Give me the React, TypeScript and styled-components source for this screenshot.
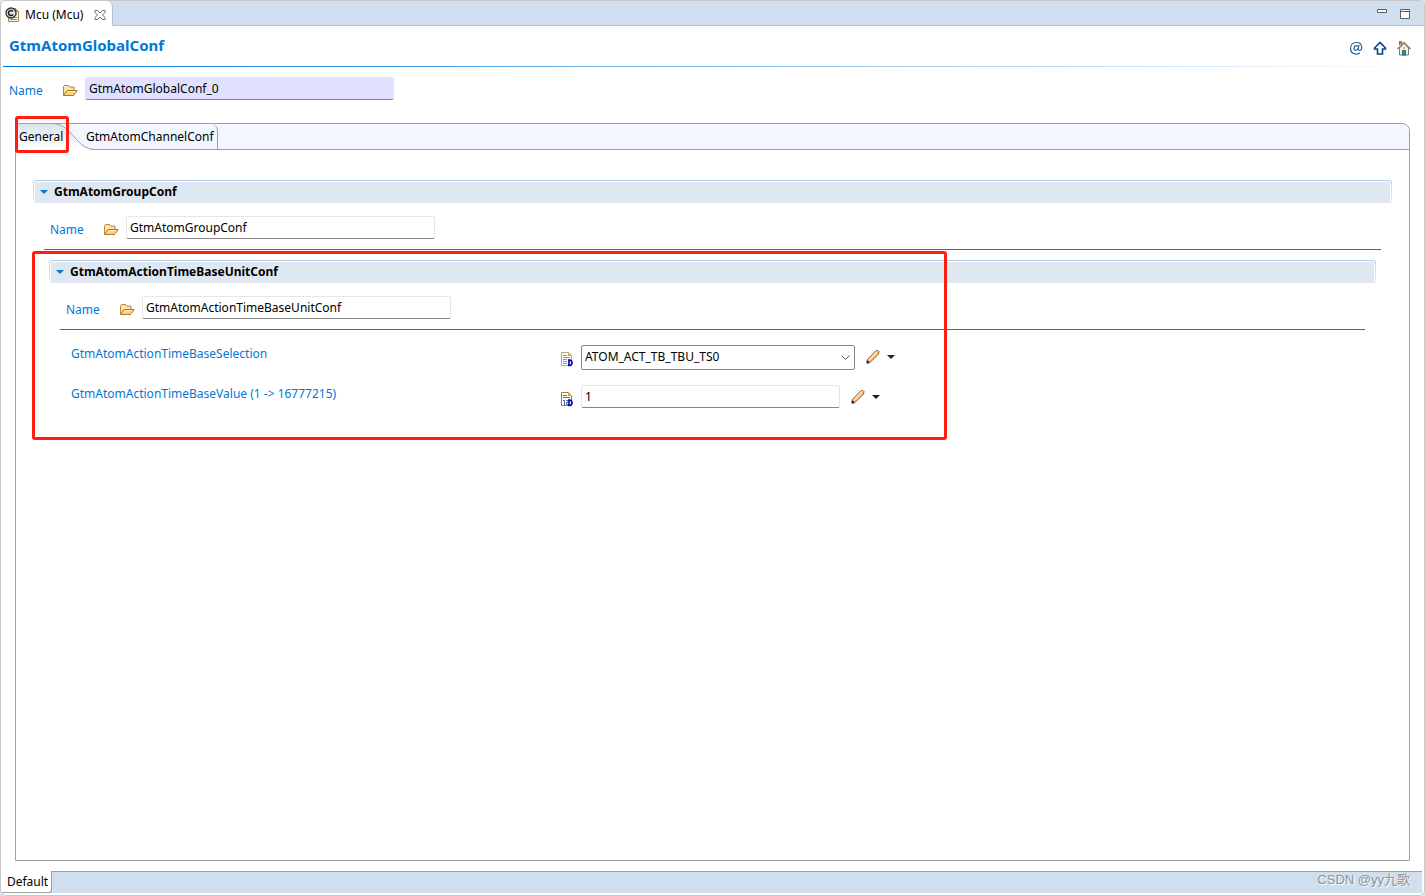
import React, { useState } from "react";
import styled, { createGlobalStyle } from "styled-components";

const GlobalStyle = createGlobalStyle`
  *, *::before, *::after { box-sizing: border-box; }
  body {
    margin: 0;
    background: #e4e4f0;
    color: #000;
    font-family: "Noto Sans", "Noto Sans CJK SC", sans-serif;
    font-size: 12px;
    line-height: 18px;
  }
  button, input, select { font: inherit; color: inherit; }
  svg { display: block; flex: none; }
`;

const Editor = styled.div`
  position: relative;
  display: flex;
  flex-direction: column;
  min-height: 100vh;
  padding-bottom: 2px;
  border: 1px solid #c8c8c8;
  border-radius: 6px;
  background: #fff;
  overflow: hidden;
`;

const TitleBar = styled.div`
  display: flex;
  justify-content: space-between;
  height: 25px;
  background: #d0dfee;
  border-bottom: 1px solid #b2bfd0;
`;

const EditorTab = styled.div`
  display: flex;
  align-items: center;
  gap: 5px;
  width: 112px;
  height: 25px;
  padding: 2px 6px 0 4px;
  background: #fff;
  border-right: 1px solid #b2bfd0;
  border-radius: 0 6px 0 0;
  white-space: nowrap;
`;

const EditorTabText = styled.span`
  flex: 1;
`;

const IconButton = styled.button`
  display: flex;
  padding: 0;
  border: 0;
  background: none;
`;

const WindowControls = styled.div`
  display: flex;
  align-items: flex-start;
  gap: 13px;
  padding: 6px 14px 0 0;
`;

const Header = styled.header`
  display: flex;
  justify-content: space-between;
  height: 41px;
  margin: 0 2px 10px;
  padding: 8px 10px 0 6px;
  background: linear-gradient(to right, #0078d7, #fff) bottom / 100% 1px no-repeat;
`;

const Title = styled.h1`
  margin: 0;
  color: #0078d7;
  font-size: 15px;
  line-height: 22px;
  font-weight: 700;
`;

const HeaderActions = styled.div`
  display: flex;
  align-items: flex-start;
  gap: 8px;
  padding-top: 6px;
`;

const NameLine = styled.div<{ $indent: number }>`
  display: flex;
  align-items: flex-end;
  height: 23px;
  padding-left: ${(p) => p.$indent}px;
`;

const NameLabel = styled.label`
  width: 53px;
  color: #0078d7;
`;

const FolderSlot = styled.span`
  width: 23px;
  padding-bottom: 3px;
`;

const TextBox = styled.input<{ $width: number; $shaded?: boolean }>`
  width: ${(p) => p.$width}px;
  height: 23px;
  padding: 0 3px 1px;
  border: 1px solid #e6e6e6;
  border-bottom-color: #868686;
  border-radius: 2px;
  background: ${(p) => (p.$shaded ? "#e0e0ff" : "#fff")};
  background-clip: padding-box;
  outline: none;
`;

const TabFolder = styled.main`
  display: flex;
  flex: 1;
  flex-direction: column;
  margin: 23px 14px 10px;
  border: 1px solid #a0a0a0;
  border-radius: 3px 8px 0 0;
`;

const TabBar = styled.div`
  position: relative;
  display: flex;
  height: 26px;
  background: #f2f6fe;
  border-bottom: 1px solid #a0a0a0;
  border-radius: 3px 8px 0 0;
`;

const FolderTab = styled.button`
  position: relative;
  height: 26px;
  width: 68px;
  padding: 0 3px;
  border: 0;
  background: none;
  text-align: left;
  white-space: nowrap;
`;

const SecondTab = styled(FolderTab)`
  height: 25px;
  width: 134px;
  padding: 0 2px;
  border-right: 1px solid #a0a0a0;
  border-radius: 0 7px 0 0;
`;

const TabShape = styled.svg`
  position: absolute;
  top: -1px;
  left: 0;
`;

const TabText = styled.span`
  position: relative;
`;

const Annotation = styled.div<{ $left: number; $top: number; $width: number; $height: number }>`
  position: absolute;
  left: ${(p) => p.$left}px;
  top: ${(p) => p.$top}px;
  width: ${(p) => p.$width}px;
  height: ${(p) => p.$height}px;
  border: 3px solid #ff1e10;
  border-radius: 3px;
  pointer-events: none;
`;

const Panel = styled.div`
  flex: 1;
  padding: 30px 17px;
`;

const Section = styled.section<{ $nested?: boolean }>`
  position: relative;
  margin: ${(p) => (p.$nested ? "10px 16px 0" : "0")};
`;

const SectionHeader = styled.h2`
  position: relative;
  height: 23px;
  margin: 0 0 13px;
  padding: 1px 2px 0;
  border-top: 1px solid #b9cae2;
  border-radius: 4px 4px 0 0;
  font-size: 12px;
  line-height: 18px;

  &::before {
    content: "";
    position: absolute;
    inset: 0 0 -5px;
    border: solid;
    border-width: 0 1px;
    border-image: linear-gradient(#b9cae2, #fff) 1;
  }
`;

const SectionToggle = styled.button`
  position: relative;
  display: flex;
  align-items: center;
  gap: 6px;
  width: 100%;
  height: 21px;
  padding: 0 0 2px 5px;
  border: 0;
  background: #dfe7f1;
  font-weight: 700;
`;

const Rule = styled.hr`
  height: 1px;
  margin: 10px 11px 0;
  border: 0;
  background: #646464;
`;

const Fields = styled.div`
  padding: 15px 0 0 22px;
`;

const FieldRow = styled.div`
  display: grid;
  grid-template-columns: 489px 21px auto auto;
  justify-content: start;
  align-items: start;
  height: 40px;
`;

const FieldLabel = styled.label`
  color: #0078d7;
`;

const TypeIcon = styled.span`
  padding-top: 6px;
`;

const SelectWrap = styled.span`
  display: flex;
  align-items: center;
  width: 274px;
`;

const Select = styled.select`
  appearance: none;
  width: 100%;
  height: 25px;
  padding: 0 20px 1px 3px;
  border: 1px solid #868686;
  border-radius: 2px;
  background: #fff;
  outline: none;
`;

const SelectArrow = styled.svg`
  margin-left: -14px;
  pointer-events: none;
`;

const EditButton = styled(IconButton)`
  align-items: center;
  gap: 6px;
  padding: 4px 0 0 10px;
`;

const Footer = styled.footer`
  display: flex;
  height: 22px;
  margin: 0 2px 0 1px;
  background: #d0dfee;
  border-top: 1px solid #a0a0a0;
`;

const PageTab = styled.button`
  width: 50px;
  height: 22px;
  margin-top: -1px;
  padding: 0 0 0 2px;
  border: solid #a0a0a0;
  border-width: 0 1px 1px 0;
  border-radius: 0 0 3px 0;
  background: #fff;
`;

const Watermark = styled.div`
  position: absolute;
  right: 14px;
  bottom: 5px;
  color: #8d959e;
  font-family: "Liberation Sans", "Noto Sans CJK SC", sans-serif;
  font-size: 13px;
  line-height: 20px;
  text-shadow: 1px 1px 0 #f4f8fc;
`;

const FileIcon = () => (
  <svg width="15" height="16" viewBox="0 0 15 16" aria-hidden="true">
    <path d="M3.5 1.5h7l3 3v10h-10z" fill="#fff8e8" stroke="#a98743" />
    <path d="M10.500 1.500v3h3z" fill="#e9b65a" stroke="#a98743" />
    <path d="M5 10.500h7M5 12.500h7M10 7.500h2" stroke="#6b8fcb" />
    <circle cx="6" cy="6" r="5" fill="#e4e4e4" stroke="#303030" strokeWidth="1.300" />
    <path d="M8 4.500a2.500 2.500 0 1 0 0 3" fill="none" stroke="#222" strokeWidth="1.600" />
  </svg>
);

const CloseIcon = () => (
  <svg width="12" height="12" viewBox="0 0 12 12" aria-hidden="true">
    <path
      d="M1 1.500h2.500L6 4l2.500-2.500H11v2L8.500 6l2.500 2.500v2H8.500L6 8l-2.500 2.500H1v-2L3.500 6 1 3.500z"
      fill="#fff"
      stroke="#6a6a6a"
    />
  </svg>
);

const FolderIcon = () => (
  <svg width="16" height="13" viewBox="0 0 16 13" aria-hidden="true">
    <path d="M1.500 11V2.500l1-1h4l1 1.500h4.500v3" fill="#fbe7ae" stroke="#b98238" />
    <path d="M1.500 11.500 5 6.500h10.200l-3.700 5z" fill="#f9d283" stroke="#b07426" />
    <path d="M5.500 7.500h8" stroke="#fff0c0" />
  </svg>
);

const PageIcon = ({ numeric }: { numeric?: boolean }) => (
  <svg width="14" height="16" viewBox="0 0 14 16" aria-hidden="true">
    <path
      d="M1.500 1.500h7l3 3v10h-10z"
      fill="#fdfdff"
      stroke={numeric ? "#a5782b" : "#b2ad8b"}
    />
    <path d="M8 1v4h4z" fill="#dfa955" />
    {numeric ? (
      <path
        d="M3 4.500h4M3 6.500h7M3 9.500h1.500M4.500 9v5M6 9.500h2v2H6.500v2H8"
        fill="none"
        stroke="#49729d"
      />
    ) : (
      <path d="M3 4.500h4M3 6.500h7M3 8.500h4M3 10.500h4M3 12.500h4" stroke="#6d9bce" />
    )}
    <path d="M8 9h2a2.500 2.800 0 0 1 0 5.500H8M9 9v5.500" fill="#dfe4ff" stroke="#0808a8" strokeWidth="1.600" />
  </svg>
);

const PencilIcon = () => (
  <svg width="16" height="16" viewBox="0 0 16 16" aria-hidden="true">
    <path d="M2.500 10.500 10.500 2l2.500-.5 1 1-.5 2.500L5.500 13l-3 .5z" fill="#f6c27c" stroke="#9a5a27" />
    <path d="m4 11 8-8.500" stroke="#ffe2b4" strokeWidth="1.500" />
    <path d="M1.500 11.500v3h3l-.5-2z" fill="#14246b" />
  </svg>
);

const CaretIcon = ({ blue }: { blue?: boolean }) => (
  <svg width="8" height="4" viewBox="0 0 8 4" aria-hidden="true">
    <path d="M0 0h8L4 4z" fill={blue ? "#0078d7" : "#222"} />
  </svg>
);

const AtIcon = () => (
  <svg width="16" height="16" viewBox="0 0 16 16" aria-hidden="true" fill="none" stroke="#2c6496">
    <path
      d="M12 13c-5 2.500-9.500.5-9.500-4.500S5.500 2.500 9 2.500c5.500 0 6 8 2.500 8-1.500 0-1.300-1.500-.5-5.500"
      strokeWidth="1.200"
    />
    <path d="M10.500 7.500c0-3-4.500-2.500-4.500 1 0 3 4 2 4.500-1z" strokeWidth="1.200" />
  </svg>
);

const UpIcon = () => (
  <svg width="16" height="16" viewBox="0 0 16 16" aria-hidden="true">
    <path d="M8 2.500 2.500 8v1H5.500v5h5V9h3V8z" fill="#fff" stroke="#0b438c" strokeWidth="1.600" />
  </svg>
);

const HomeIcon = () => (
  <svg width="16" height="16" viewBox="0 0 16 16" aria-hidden="true">
    <path d="M3.500 8v7h9V8L8 3.500z" fill="#e8f3fa" stroke="#5f7f9e" />
    <path d="M3.500 5V1.500h2V4" fill="#d58a60" stroke="#8f5b43" />
    <path d="m1.500 9 6.500-6.500L14.500 9" fill="none" stroke="#a98052" strokeWidth="1.500" />
    <path d="M6.500 15v-4.500h3V15z" fill="#4f9a62" stroke="#2a6278" />
    <path d="M7 7h2v2H7z" fill="#e4c527" />
  </svg>
);

const MinimizeIcon = () => (
  <svg width="10" height="6" viewBox="0 0 10 6" aria-hidden="true">
    <path d="M.5 2.500h9v3h-9z" fill="#fff" stroke="#606060" />
  </svg>
);

const MaximizeIcon = () => (
  <svg width="10" height="12" viewBox="0 0 10 12" aria-hidden="true">
    <path d="M.5 2.500h9v9h-9zM.5 4.500h9" fill="#fff" stroke="#606060" />
  </svg>
);

interface NameFieldProps {
  id: string;
  value: string;
  indent: number;
  shaded?: boolean;
}

const NameField = ({ id, value, indent, shaded }: NameFieldProps) => (
  <NameLine $indent={indent}>
    <NameLabel htmlFor={id}>Name</NameLabel>
    <FolderSlot>
      <FolderIcon />
    </FolderSlot>
    <TextBox id={id} defaultValue={value} $width={309} $shaded={shaded} />
  </NameLine>
);

interface ConfSectionProps {
  title: string;
  nested?: boolean;
  children: React.ReactNode;
}

const ConfSection = ({ title, nested, children }: ConfSectionProps) => {
  const [open, setOpen] = useState(true);
  return (
    <Section $nested={nested}>
      <SectionHeader>
        <SectionToggle aria-expanded={open} onClick={() => setOpen(!open)}>
          <CaretIcon blue />
          {title}
        </SectionToggle>
      </SectionHeader>
      {open && children}
    </Section>
  );
};

export default function App() {
  return (
    <>
      <GlobalStyle />
      <Editor>
        <TitleBar>
          <EditorTab>
            <FileIcon />
            <EditorTabText>Mcu (Mcu)</EditorTabText>
            <IconButton aria-label="Close">
              <CloseIcon />
            </IconButton>
          </EditorTab>
          <WindowControls>
            <IconButton aria-label="Minimize">
              <MinimizeIcon />
            </IconButton>
            <IconButton aria-label="Maximize">
              <MaximizeIcon />
            </IconButton>
          </WindowControls>
        </TitleBar>
        <Header>
          <Title>GtmAtomGlobalConf</Title>
          <HeaderActions>
            <IconButton aria-label="Reference">
              <AtIcon />
            </IconButton>
            <IconButton aria-label="Up">
              <UpIcon />
            </IconButton>
            <IconButton aria-label="Home">
              <HomeIcon />
            </IconButton>
          </HeaderActions>
        </Header>
        <NameField id="global-name" value="GtmAtomGlobalConf_0" indent={8} shaded />
        <TabFolder>
          <TabBar role="tablist">
            <FolderTab role="tab" aria-selected="true">
              <TabShape width="80" height="27" viewBox="0 0 80 27" aria-hidden="true">
                <defs>
                  <linearGradient id="tab-fill" x1="0" y1="0" x2="0" y2="1">
                    <stop offset="0" stopColor="#dbe4ef" />
                    <stop offset="1" stopColor="#fff" />
                  </linearGradient>
                </defs>
                <path d="M0 3 3 1h36c18 1 20 26 41 26H0z" fill="url(#tab-fill)" />
                <path d="M37 .5c20 1 22 26 43 26" fill="none" stroke="#a0a0a0" />
              </TabShape>
              <TabText>General</TabText>
              <Annotation $left={-1} $top={-8} $width={54} $height={37} />
            </FolderTab>
            <SecondTab role="tab" aria-selected="false">
              GtmAtomChannelConf
            </SecondTab>
          </TabBar>
          <Panel role="tabpanel">
            <ConfSection title="GtmAtomGroupConf">
              <NameField id="group-name" value="GtmAtomGroupConf" indent={17} />
              <Rule />
              <ConfSection title="GtmAtomActionTimeBaseUnitConf" nested>
                <NameField id="unit-name" value="GtmAtomActionTimeBaseUnitConf" indent={17} />
                <Rule />
                <Fields>
                  <FieldRow>
                    <FieldLabel htmlFor="selection">GtmAtomActionTimeBaseSelection</FieldLabel>
                    <TypeIcon>
                      <PageIcon />
                    </TypeIcon>
                    <SelectWrap>
                      <Select id="selection">
                        <option>ATOM_ACT_TB_TBU_TS0</option>
                      </Select>
                      <SelectArrow width="9" height="5" viewBox="0 0 9 5" aria-hidden="true">
                        <path d="m.5.5 4 4 4-4" fill="none" stroke="#555" />
                      </SelectArrow>
                    </SelectWrap>
                    <EditButton aria-label="Edit selection">
                      <PencilIcon />
                      <CaretIcon />
                    </EditButton>
                  </FieldRow>
                  <FieldRow>
                    <FieldLabel htmlFor="value">
                      GtmAtomActionTimeBaseValue (1 -&gt; 16777215)
                    </FieldLabel>
                    <TypeIcon>
                      <PageIcon numeric />
                    </TypeIcon>
                    <TextBox id="value" defaultValue="1" $width={259} />
                    <EditButton aria-label="Edit value">
                      <PencilIcon />
                      <CaretIcon />
                    </EditButton>
                  </FieldRow>
                </Fields>
                <Annotation $left={-17} $top={-9} $width={915} $height={189} />
              </ConfSection>
            </ConfSection>
          </Panel>
        </TabFolder>
        <Footer>
          <PageTab>Default</PageTab>
        </Footer>
        <Watermark>CSDN @yy九歌</Watermark>
      </Editor>
    </>
  );
}
